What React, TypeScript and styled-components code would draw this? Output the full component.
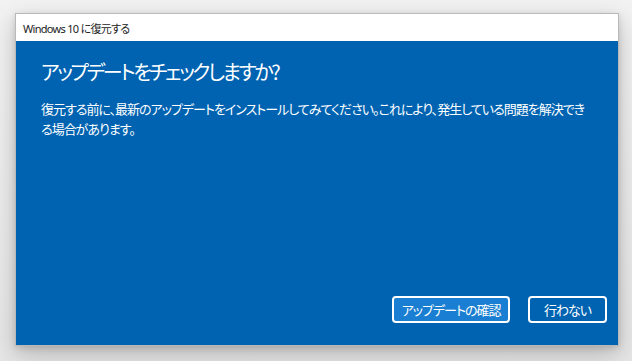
import React from "react";
import styled, { createGlobalStyle } from "styled-components";

const GlobalStyle = createGlobalStyle`
  html, body {
    margin: 0;
    padding: 0;
    background: #ebebeb;
    font-family: "Noto Sans", "Noto Sans CJK JP", sans-serif;
  }
`;

const Page = styled.div`
  width: 632px;
  height: 361px;
  padding: 13px 0 0 15px;
  box-sizing: border-box;
  background: linear-gradient(180deg, #f2f2f2 0%, #e6e6e6 100%);
`;

const Window = styled.div`
  width: 604px;
  height: 333px;
  box-sizing: border-box;
  display: flex;
  flex-direction: column;
  border: 1px solid #b9b9b9;
  box-shadow: 0 8px 22px rgba(0, 0, 0, 0.22), 0 2px 6px rgba(0, 0, 0, 0.12);
`;

const TitleBar = styled.div`
  height: 27px;
  flex: none;
  display: flex;
  align-items: center;
  padding-left: 7px;
  background: #ffffff;
  color: #1b1b1b;
  font-size: 11px;
  letter-spacing: -0.7px;
  font-feature-settings: "palt";
`;

const Panel = styled.div`
  flex: 1;
  display: flex;
  flex-direction: column;
  background: #0063b1;
  color: #ffffff;
  padding: 17px 11px 22px 25px;
  font-family: "Noto Sans CJK JP", sans-serif;
  font-feature-settings: "palt";
`;

const Heading = styled.h1`
  margin: 0;
  font-size: 20px;
  line-height: 28px;
  font-weight: 400;
  letter-spacing: -2.4px;
`;

const Body = styled.p`
  margin: 13px 0 0;
  font-size: 13px;
  line-height: 20px;
  letter-spacing: -1px;
  white-space: nowrap;
`;

const Footer = styled.div`
  margin-top: auto;
  display: flex;
  justify-content: flex-end;
  gap: 18px;
`;

const Button = styled.button<{ $primary?: boolean }>`
  height: 27px;
  width: ${(p) => (p.$primary ? "118px" : "79px")};
  box-sizing: border-box;
  border: 2px solid #ffffff;
  border-radius: 4px;
  background: ${(p) => (p.$primary ? "#1a7fd2" : "#0063b1")};
  color: #ffffff;
  font-family: "Noto Sans CJK JP", sans-serif;
  font-feature-settings: "palt";
  font-size: 13px;
  letter-spacing: -1px;
  padding: 0;
  cursor: pointer;
`;

export default function App() {
  return (
    <Page>
      <GlobalStyle />
      <Window>
        <TitleBar>Windows 10 に復元する</TitleBar>
        <Panel>
          <Heading>アップデートをチェックしますか?</Heading>
          <Body>
            復元する前に、最新のアップデートをインストールしてみてください。これにより、発生している問題を解決でき
            <br />
            る場合があります。
          </Body>
          <Footer>
            <Button $primary>アップデートの確認</Button>
            <Button>行わない</Button>
          </Footer>
        </Panel>
      </Window>
    </Page>
  );
}
